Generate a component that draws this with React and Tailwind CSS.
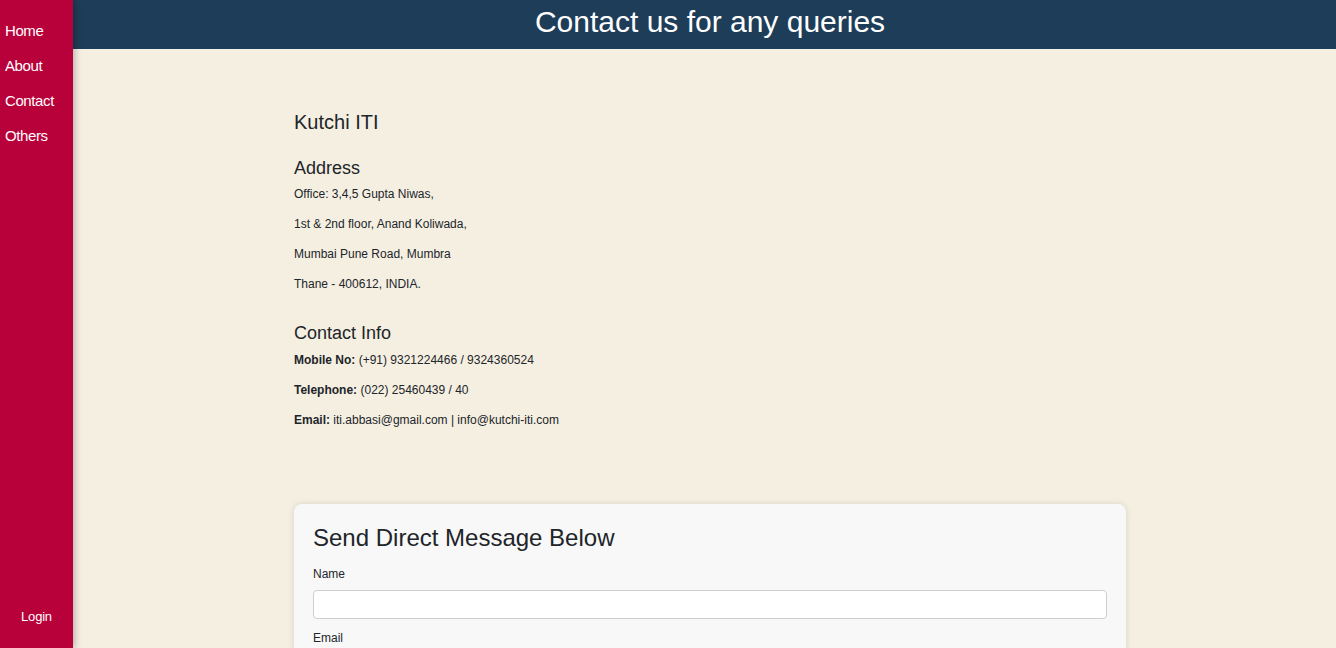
import React from 'react'

const navLinks = ['Home', 'About', 'Contact', 'Others']

function Sidebar() {
  return (
    <aside className="w-[73px] h-screen shrink-0 bg-[#b8003a] flex flex-col justify-between shadow-[2px_0_6px_rgba(0,0,0,0.25)] z-10">
      <nav className="flex flex-col pt-[22px] gap-[17px]">
        {navLinks.map(link => (
          <a key={link} href="#" className="pl-[5px] text-white text-[15px] leading-[18px] tracking-[-0.4px]">
            {link}
          </a>
        ))}
      </nav>
      <div className="pb-[20px] text-center">
        <a href="#" className="text-white text-[13px] leading-[16px] tracking-[-0.2px]">Login</a>
      </div>
    </aside>
  )
}

function Field({ label, className = '' }) {
  return (
    <div className={className}>
      <label className="block text-[12px] leading-[14px] text-[#212529]">{label}</label>
      <input
        type="text"
        className="mt-[9px] block w-full h-[29px] bg-white border border-[#cfcfcf] rounded-[4px]"
      />
    </div>
  )
}

export default function App() {
  return (
    <div className="flex h-screen overflow-hidden bg-[#f5efe2] font-['Liberation_Sans',Arial,sans-serif]">
      <Sidebar />
      <main className="flex-1 flex flex-col min-w-0">
        <header className="h-[49px] shrink-0 bg-[#1e3d58] flex items-center justify-center">
          <h1 className="text-white text-[30px] leading-[36px] pl-[11px] pb-[6px]">Contact us for any queries</h1>
        </header>
        <div className="flex-1 pl-[221px] pr-[210px] pt-[61px] text-[#212529]">
          <h2 className="text-[20px] leading-[24px]">Kutchi ITI</h2>
          <h3 className="mt-[23px] text-[18px] leading-[22px]">Address</h3>
          <div className="mt-[8px] text-[12px] leading-[14px] flex flex-col gap-[16px]">
            <p>Office: 3,4,5 Gupta Niwas,</p>
            <p>1st &amp; 2nd floor, Anand Koliwada,</p>
            <p>Mumbai Pune Road, Mumbra</p>
            <p>Thane - 400612, INDIA.</p>
          </div>
          <h3 className="mt-[31px] text-[18px] leading-[22px]">Contact Info</h3>
          <div className="mt-[9px] text-[12px] leading-[14px] flex flex-col gap-[16px]">
            <p><b>Mobile No:</b> (+91) 9321224466 / 9324360524</p>
            <p><b>Telephone:</b> (022) 25460439 / 40</p>
            <p><b>Email:</b> iti.abbasi@gmail.com | info@kutchi-iti.com</p>
          </div>
          <section className="mt-[77px] bg-[#f8f8f8] rounded-[8px] shadow-[0_0_6px_rgba(0,0,0,0.12)] px-[19px] pt-[19px] pb-[24px]">
            <h2 className="text-[24px] leading-[29px] text-[#212529]">Send Direct Message Below</h2>
            <Field label="Name" className="mt-[15px]" />
            <Field label="Email" className="mt-[12px]" />
          </section>
        </div>
      </main>
    </div>
  )
}
